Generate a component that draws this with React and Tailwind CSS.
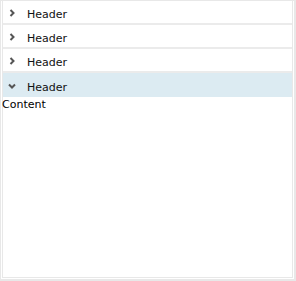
import { useState } from "react";

function Chevron({ open }) {
  return (
    <svg width="8" height="8" viewBox="0 0 8 8" className="shrink-0 mt-[1px]">
      {open ? (
        <path d="M1 2.5 L4 5.5 L7 2.5" fill="none" stroke="#555" strokeWidth="2" />
      ) : (
        <path d="M2.5 1 L5.5 4 L2.5 7" fill="none" stroke="#555" strokeWidth="2" />
      )}
    </svg>
  );
}

export default function App() {
  const [open, setOpen] = useState(3);
  const items = [0, 1, 2, 3];

  return (
    <div className="w-[296px] h-[281px] bg-white font-['DejaVu_Sans',sans-serif] text-[11px] text-black">
      <div className="h-full border border-r-2 border-b-2 border-[#e8e8e8] px-px pb-px">
        <div className="h-full border border-t-0 border-[#e8e8e8] flex flex-col">
          {items.map((i) => (
            <div key={i}>
              <button
                onClick={() => setOpen(open === i ? -1 : i)}
                className={`w-full h-[24px] flex items-center pl-[5px] gap-[11px] text-left ${
                  open === i ? "bg-[#dcebf2]" : "bg-white"
                } ${i < 3 ? "border-b-2 border-[#ebebeb]" : ""}`}
              >
                <Chevron open={open === i} />
                <span className="text-[#111] mt-[6px]">Header</span>
              </button>
              {open === i && <div className="-ml-[1px]">Content</div>}
            </div>
          ))}
        </div>
      </div>
    </div>
  );
}
